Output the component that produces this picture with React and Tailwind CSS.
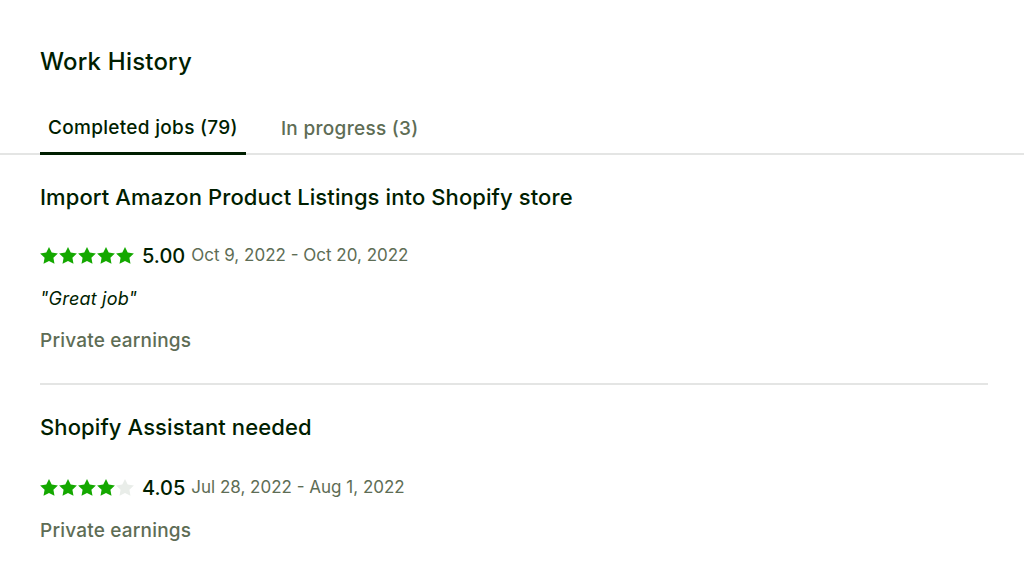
const jobs = [
  {
    title: "Import Amazon Product Listings into Shopify store",
    rating: 5,
    score: "5.00",
    dates: "Oct 9, 2022 - Oct 20, 2022",
    feedback: '"Great job"',
  },
  {
    title: "Shopify Assistant needed",
    rating: 4,
    score: "4.05",
    dates: "Jul 28, 2022 - Aug 1, 2022",
  },
];

function Star({ filled }) {
  return (
    <svg width="18" height="17" viewBox="0.5 0.3 23 22" className="shrink-0">
      <path
        d="M12 0.3l3.5 7.2 8 1.1-5.8 5.6 1.4 7.9L12 18.3l-7.1 3.8 1.4-7.9L0.5 8.6l8-1.1z"
        fill={filled ? "#14a800" : "#e9ede9"}
      />
    </svg>
  );
}

function Job({ job, last }) {
  return (
    <div className={`pt-[29px] ${last ? "" : "border-b-2 border-[#e4e5e4] pb-[30px] mr-[36px]"}`}>
      <h3 className="text-[22px] leading-[26px] font-medium tracking-[0.1px] text-[#001e00]">{job.title}</h3>
      <div className={`${last ? "mt-[33px]" : "mt-[31px]"} flex items-center`}>
        <div className="flex gap-[1px]">
          {[0, 1, 2, 3, 4].map((i) => (
            <Star key={i} filled={i < job.rating} />
          ))}
        </div>
        <span className="ml-[8px] text-[20px] font-medium text-[#001e00]">{job.score}</span>
        <span className="ml-[6px] text-[17px] text-[#5e6d55]">{job.dates}</span>
      </div>
      {job.feedback && (
        <p className="mt-[16px] text-[18px] italic tracking-[0.2px] text-[#001e00] leading-[24px]">{job.feedback}</p>
      )}
      <p className={`${last ? "mt-[16px]" : "mt-[18px]"} text-[19px] font-medium tracking-[0.2px] text-[#5e6d55] leading-[24px]`}>
        Private earnings
      </p>
    </div>
  );
}

export default function App() {
  return (
    <div className="min-h-screen bg-white pt-[47px] font-['Inter',sans-serif]">
      <h2 className="px-10 text-[24px] leading-[30px] font-medium tracking-[0.2px] text-[#001e00]">Work History</h2>
      <div className="mt-[37px] flex border-b-2 border-[#e4e5e4] px-10">
        <button className="-mb-[2px] border-b-[3px] border-[#001e00] px-[8px] pb-[9px] text-[19px] font-medium tracking-[0.3px] text-[#001e00]">
          Completed jobs (79)
        </button>
        <button className="ml-[35px] pb-[9px] text-[19px] font-medium tracking-[0.3px] text-[#5e6d55]">
          In progress (3)
        </button>
      </div>
      <div className="pl-10">
        {jobs.map((job, i) => (
          <Job key={i} job={job} last={i === jobs.length - 1} />
        ))}
      </div>
    </div>
  );
}
